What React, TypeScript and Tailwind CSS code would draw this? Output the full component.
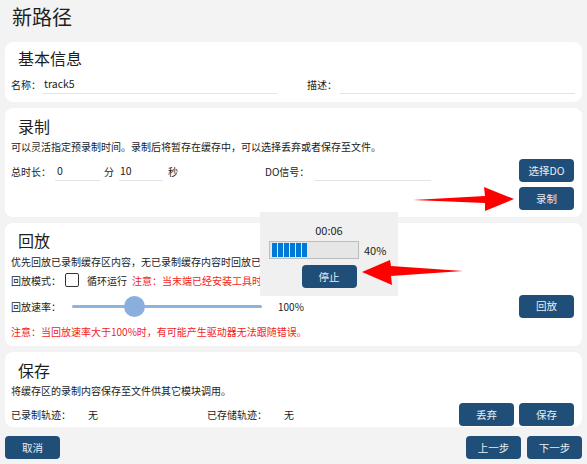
import React from "react";

const font = "font-['Noto_Sans_CJK_SC','Noto_Sans',sans-serif]";

function Btn({ children, className = "" }: { children: React.ReactNode; className?: string }) {
  return (
    <button
      className={`h-[23px] w-[55px] rounded-[4px] bg-[#1f4e78] text-[10.5px] text-[#e8eef4] flex items-center justify-center ${className}`}
    >
      {children}
    </button>
  );
}

function Field({ value = "", className = "" }: { value?: string; className?: string }) {
  return (
    <div className={`h-[20px] border-b border-[#e4e4e4] flex items-center pl-[1px] text-[10.5px] text-[#222] ${className}`}>
      {value}
    </div>
  );
}

function Heading({ children }: { children: React.ReactNode }) {
  return <div className="h-[22px] pl-[7px] flex items-center text-[16px] text-[#1e1e1e]">{children}</div>;
}

function Desc({ children, className = "" }: { children: React.ReactNode; className?: string }) {
  return <div className={`h-[16px] flex items-center text-[10px] text-[#222] whitespace-nowrap ${className}`}>{children}</div>;
}

export default function App() {
  return (
    <div className={`relative w-[587px] h-[464px] overflow-hidden bg-[#f3f3f3] ${font}`}>
      {/* title */}
      <div className="h-[42px] pl-[12px] pt-[4px] leading-[26px] text-[20px] text-[#1e1e1e]">新路径</div>

      <div className="mx-[5px] flex flex-col gap-[6px]">
        {/* 基本信息 */}
        <div className="bg-white rounded-[8px] pl-[6px] pr-[7px] pt-[5px] pb-[8px]">
          <Heading>基本信息</Heading>
          <div className="mt-[5px] h-[20px] flex items-center text-[10px] text-[#222]">
            <span className="w-[32px]">名称：</span>
            <Field value="track5" className="w-[234px]" />
            <span className="ml-[30px] w-[33px]">描述：</span>
            <Field className="w-[235px]" />
          </div>
        </div>

        {/* 录制 */}
        <div className="bg-white rounded-[8px] pl-[6px] pr-[8px] pt-[7px] pb-[7px]">
          <Heading>录制</Heading>
          <Desc className="mt-[1px]">可以灵活指定预录制时间。录制后将暂存在缓存中，可以选择丢弃或者保存至文件。</Desc>
          <div className="mt-[5px] flex justify-between">
            <div className="h-[24px] flex items-center text-[10px] text-[#222]">
              <span className="w-[44px]">总时长：</span>
              <Field value="0" className="w-[45px] pl-[2px]" />
              <span className="ml-[4px] w-[15px]">分</span>
              <Field value="10" className="w-[44px]" />
              <span className="ml-[5px] w-[11px]">秒</span>
              <span className="ml-[86px] w-[49px]">DO信号：</span>
              <Field className="w-[117px] -mb-[-0px]" />
            </div>
            <div className="flex flex-col gap-[5px]">
              <Btn>选择DO</Btn>
              <Btn>录制</Btn>
            </div>
          </div>
        </div>

        {/* 回放 */}
        <div className="bg-white rounded-[8px] pl-[6px] pr-[8px] pt-[6px] pb-[7px]">
          <Heading>回放</Heading>
          <Desc className="mt-[2px]">优先回放已录制缓存区内容，无已录制缓存内容时回放已保存的轨迹文件。</Desc>
          <div className="mt-[1px] h-[20px] flex items-center text-[10px] text-[#222]">
            <span className="w-[54px]">回放模式：</span>
            <span className="w-[14px] h-[14px] border-[1.5px] border-[#333] rounded-[2px]" />
            <span className="ml-[8px]">循环运行</span>
            <span className="ml-[5px] text-[#f21d1d]">注意：当末端已经安装工具时，请在回放前设置好工具信息。</span>
          </div>
          <div className="mt-[4px] h-[24px] flex items-center text-[10px] text-[#222]">
            <span className="w-[61px]">回放速率：</span>
            <div className="relative w-[190px] h-[3px] bg-[#8db3e0] rounded-full">
              <div className="absolute left-[52px] top-[-9px] w-[21px] h-[21px] rounded-full bg-[#8aafdd]" />
            </div>
            <span className="ml-[16px]">100%</span>
            <div className="flex-1" />
            <Btn>回放</Btn>
          </div>
          <Desc className="mt-[5px] text-[#f21d1d]">
            <span className="text-[#f21d1d]">注意：当回放速率大于100%时，有可能产生驱动器无法跟随错误。</span>
          </Desc>
        </div>

        {/* 保存 */}
        <div className="bg-white rounded-[8px] pl-[6px] pr-[8px] pt-[7px] pb-[1px]">
          <Heading>保存</Heading>
          <Desc className="mt-[1px]">将缓存区的录制内容保存至文件供其它模块调用。</Desc>
          <div className="mt-[5px] h-[23px] flex items-center text-[10px] text-[#222]">
            <span className="w-[77px]">已录制轨迹：</span>
            <span className="w-[119px]">无</span>
            <span className="w-[77px]">已存储轨迹：</span>
            <span>无</span>
            <div className="flex-1" />
            <div className="flex gap-[5px]">
              <Btn>丢弃</Btn>
              <Btn>保存</Btn>
            </div>
          </div>
        </div>
      </div>

      {/* bottom bar */}
      <div className="mt-[9px] px-[5px] flex justify-between">
        <Btn className="w-[54px]">取消</Btn>
        <div className="flex gap-[6px]">
          <Btn className="w-[54px]">上一步</Btn>
          <Btn>下一步</Btn>
        </div>
      </div>

      {/* progress popup */}
      <div className="absolute left-[260px] top-[212px] w-[138px] h-[84px] bg-[#f0f0f0] flex flex-col items-center">
        <div className="mt-[10px] h-[16px] flex items-center text-[11px] text-[#222]">00:06</div>
        <div className="mt-[3px] w-full flex items-center pl-[9px]">
          <div className="w-[90px] h-[18px] border border-[#bdbdbd] bg-[#e6e6e6] flex items-center gap-[1px] pl-[2px]">
            {[0, 1, 2, 3, 4, 5].map((i) => (
              <div key={i} className="w-[5px] h-[14px] bg-[#0078d7]" />
            ))}
          </div>
          <span className="ml-[5px] text-[11px] text-[#222]">40%</span>
        </div>
        <Btn className="mt-[6px] w-[54px]">停止</Btn>
      </div>

      {/* arrows */}
      <svg className="absolute left-0 top-0 pointer-events-none" width="587" height="464">
        <polygon points="413,200 485,196 484,187 514,199 485,211 485,203" fill="#ff0000" />
        <polygon points="463,271 391,266 390,260 362,272 392,285 391,276" fill="#ff0000" />
      </svg>
    </div>
  );
}
